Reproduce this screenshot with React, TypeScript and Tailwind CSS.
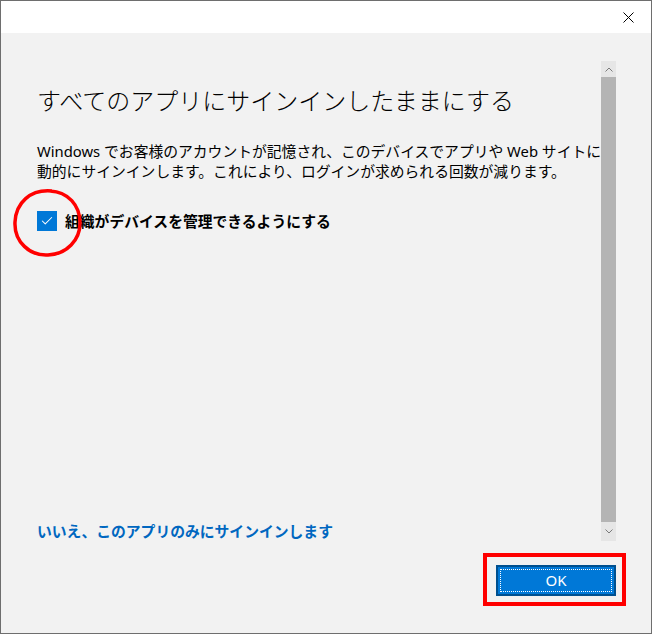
import { Check } from "lucide-react";

const jp = { fontFamily: '"Noto Sans", "Noto Sans CJK JP", sans-serif' };

function Chevron({ up }: { up?: boolean }) {
    return (
        <svg width="8" height="5" viewBox="0 0 8 5" className="text-[#7a7a7a]">
            <path d={up ? "M0.5 4.5 L4 1 L7.5 4.5" : "M0.5 0.5 L4 4 L7.5 0.5"} fill="none" stroke="currentColor" strokeWidth="1" />
        </svg>
    );
}

export default function App() {
    return (
        <div className="w-[652px] h-[634px] flex flex-col border border-[#6e6e6e] bg-[#f2f2f2] relative overflow-hidden" style={jp}>
            {/* title bar */}
            <div className="h-[32px] bg-white flex justify-end shrink-0">
                <div className="w-[46px] flex items-center justify-center">
                    <svg width="11" height="11" viewBox="0 0 11 11">
                        <path d="M0.5 0.5 L10.5 10.5 M10.5 0.5 L0.5 10.5" stroke="#000" strokeWidth="1" />
                    </svg>
                </div>
            </div>

            {/* scroll area */}
            <div className="flex mt-[28px] h-[480px] pr-[35px]">
                <div className="flex-1 flex flex-col pl-[36px] text-black">
                    <h1 className="text-[24px] font-light leading-[36px] mt-[22px] whitespace-nowrap">
                        すべてのアプリにサインインしたままにする
                    </h1>
                    <div className="text-[14.8px] leading-[20px] mt-[22px] whitespace-nowrap">
                        <p>Windows でお客様のアカウントが記憶され、このデバイスでアプリや Web サイトに</p>
                        <p>動的にサインインします。これにより、ログインが求められる回数が減ります。</p>
                    </div>
                    <label className="flex items-center gap-[8px] mt-[30px]">
                        <span className="w-[20px] h-[20px] bg-[#0078d7] flex items-center justify-center">
                            <Check className="w-[14px] h-[14px] text-white" strokeWidth={1.75} />
                        </span>
                        <span className="text-[14.8px] font-bold leading-[20px]">組織がデバイスを管理できるようにする</span>
                    </label>
                    <a className="mt-auto text-[14.8px] font-bold leading-[20px] text-[#0067c0] whitespace-nowrap">
                        いいえ、このアプリのみにサインインします
                    </a>
                </div>
                <div className="w-[16px] flex flex-col">
                    <div className="h-[16px] bg-[#e6e6e6] flex items-center justify-center">
                        <Chevron up />
                    </div>
                    <div className="flex-1 bg-[#b4b4b4]" />
                    <div className="h-[19px] bg-[#e6e6e6] flex items-center justify-center">
                        <Chevron />
                    </div>
                </div>
            </div>

            {/* footer */}
            <div className="flex justify-end pr-[35px] mt-[24px]">
                <button className="w-[120px] h-[31px] bg-[#0078d7] border-2 border-[#00508f] p-[2px]">
                    <span className="w-full h-full flex items-center justify-center border border-dotted border-white text-white text-[15px]">
                        OK
                    </span>
                </button>
            </div>

            {/* red annotations */}
            <svg className="absolute left-[11px] top-[186px] pointer-events-none" width="72" height="72" viewBox="0 0 72 72">
                <path d="M40 4 C18 2 4 16 3 35 C2 55 18 69 36 68 C55 67 68 53 68 36 C68 18 56 5 38 4" fill="none" stroke="#ff0000" strokeWidth="3.5" />
            </svg>
            <div className="absolute left-[482px] top-[552px] w-[143px] h-[53px] border-4 border-[#ff0000] pointer-events-none" />
        </div>
    );
}
